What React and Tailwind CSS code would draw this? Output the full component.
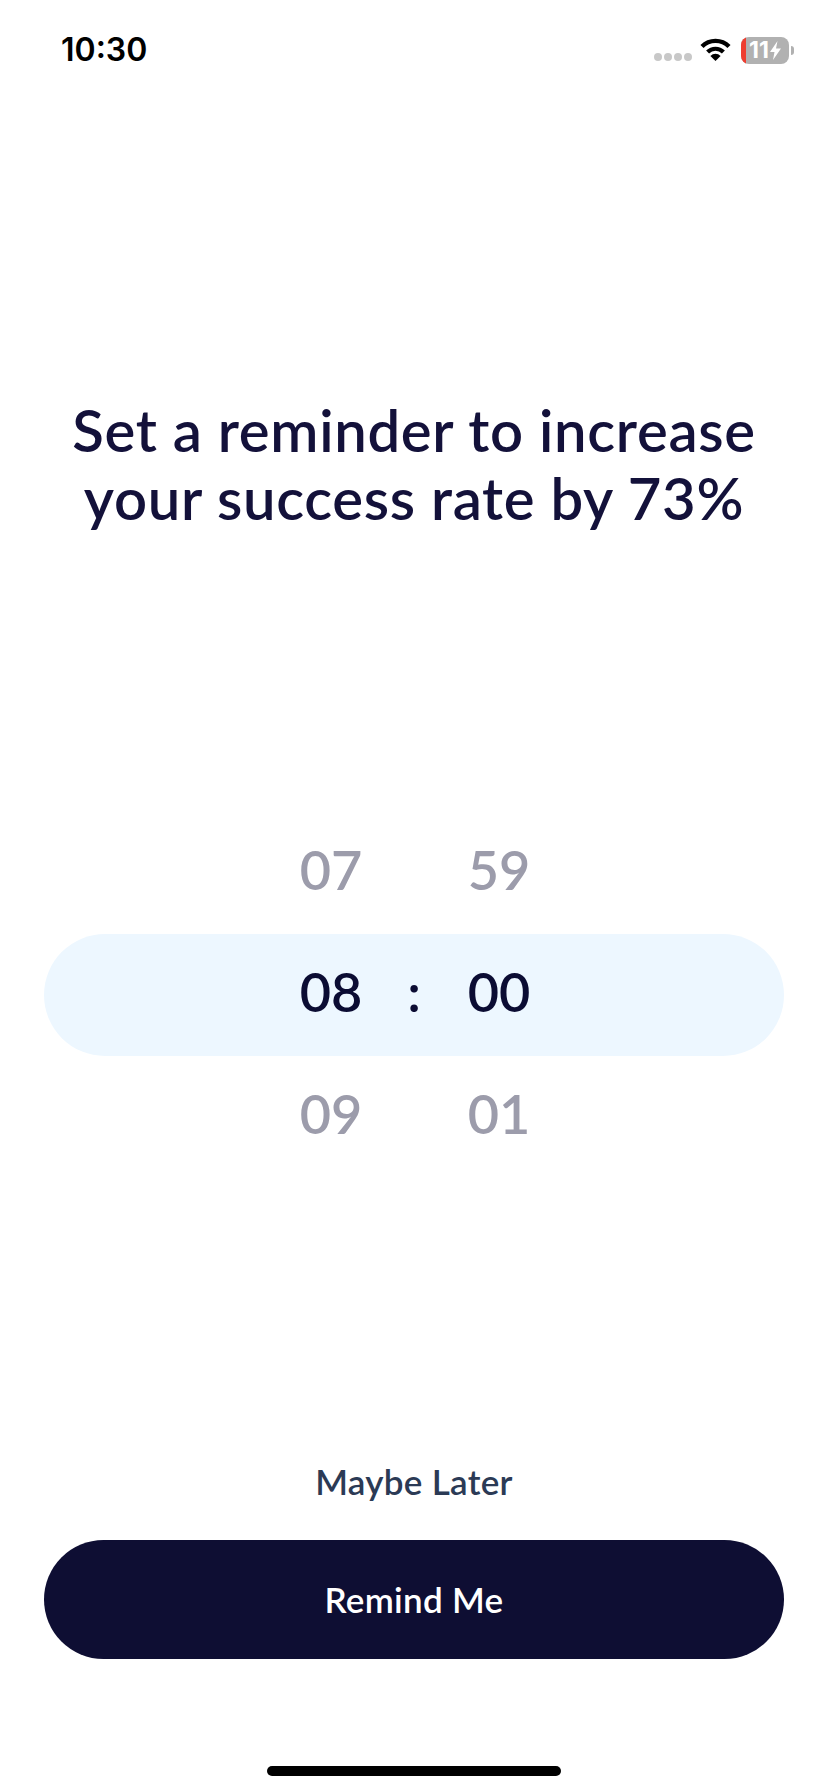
import React from 'react';

const FONT = "font-['Lato','Noto_Sans',sans-serif]";

const StatusBar = () => (
  <div className="flex items-center justify-between h-[100px] pl-[61px] pr-[34px]">
    <span className="font-['Inter',sans-serif] text-[32px] font-semibold leading-none text-black">10:30</span>
    <div className="flex items-center">
      <div className="flex gap-[2px] mt-[14px] mr-[8px]">
        <span className="w-[8px] h-[8px] rounded-full bg-[#c8c8c8]"></span>
        <span className="w-[8px] h-[8px] rounded-full bg-[#c8c8c8]"></span>
        <span className="w-[8px] h-[8px] rounded-full bg-[#c8c8c8]"></span>
        <span className="w-[8px] h-[8px] rounded-full bg-[#c8c8c8]"></span>
      </div>
      <svg width="31" height="24" viewBox="0 0 31 24" className="mr-[10px] mb-[2px]">
        <path d="M2 9.5 A19 19 0 0 1 29 9.5" fill="none" stroke="#000" strokeWidth="4.4" />
        <path d="M7.6 15 A11.2 11.2 0 0 1 23.4 15" fill="none" stroke="#000" strokeWidth="4.2" />
        <path d="M15.5 24 L10.4 18.9 A7.2 7.2 0 0 1 20.6 18.9 Z" fill="#000" />
      </svg>
      <div className="flex items-center">
        <div className="flex w-[48px] h-[27px] rounded-[8px] overflow-hidden bg-[#b1b1b1]">
          <div className="w-[5px] bg-[#ee3d30]"></div>
          <div className="flex items-center pl-[3px] font-['Inter',sans-serif] text-[23px] font-bold leading-none text-white">
            <span>11</span>
            <svg width="11" height="19" viewBox="0 0 11 19" className="ml-[1px]">
              <path d="M7.5 0 L0 11 H4.5 L3 19 L11 7.5 H6 Z" fill="#fff" />
            </svg>
          </div>
        </div>
        <div className="w-[3px] h-[9px] ml-[2px] rounded-r-full bg-[#b1b1b1]"></div>
      </div>
    </div>
  </div>
);

const WheelRow = ({ left, right, active }) => (
  <div
    className={
      active
        ? 'grid grid-cols-[100px_69px_100px] justify-center items-center h-[122px] pb-[6px] rounded-full bg-[#edf7ff] text-[#0b0c33]'
        : 'grid grid-cols-[100px_69px_100px] justify-center items-center h-[122px] pb-[6px] text-[#9c9cab]'
    }
  >
    <span className="pl-[3px] text-center">{left}</span>
    <span className="text-center">{active ? ':' : ''}</span>
    <span className="pl-[1px] text-center">{right}</span>
  </div>
);

const App = () => {
  return (
    <div className={`flex flex-col w-[828px] h-[1792px] bg-white ${FONT}`}>
      <StatusBar />

      <h1 className="mt-[296px] text-center text-[58px] leading-[68px] font-semibold tracking-[0.7px] text-[#13113a]">
        Set a reminder to increase
        <br />
        your success rate by 73%
      </h1>

      <div className="mt-[280px] mx-[44px] text-[54px] leading-none font-semibold">
        <WheelRow left="07" right="59" />
        <WheelRow left="08" right="00" active />
        <WheelRow left="09" right="01" />
      </div>

      <button className="mt-[280px] text-center text-[35px] leading-[46px] font-semibold tracking-[0.3px] text-[#2b3a55]">
        Maybe Later
      </button>

      <button className="mt-[36px] mx-[44px] h-[119px] rounded-full bg-[#0e0e33] text-center text-[35px] font-semibold tracking-[0.3px] text-white">
        Remind Me
      </button>

      <div className="mt-[107px] mx-auto w-[294px] h-[10px] rounded-full bg-black"></div>
    </div>
  );
};

export default App;
